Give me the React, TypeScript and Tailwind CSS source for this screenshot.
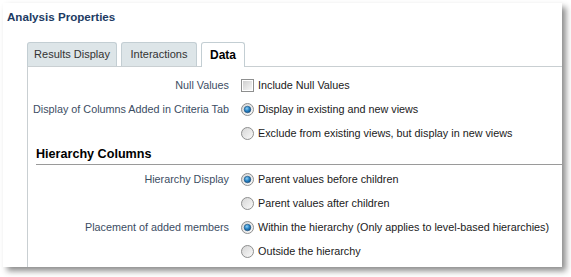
import React from 'react'

const font = { fontFamily: '"Liberation Sans", Arial, sans-serif' }

function Radio({ checked }: { checked?: boolean }) {
  return (
    <svg width="13" height="13" viewBox="0 0 13 13" className="shrink-0">
      <defs>
        <linearGradient id="rbg" x1="0" y1="0" x2="1" y2="1">
          <stop offset="0" stopColor="#d4d4d4" />
          <stop offset="1" stopColor="#fbfbfb" />
        </linearGradient>
        <radialGradient id="rdot" cx="0.4" cy="0.35" r="0.7">
          <stop offset="0" stopColor="#8fd0f5" />
          <stop offset="0.5" stopColor="#2a86c8" />
          <stop offset="1" stopColor="#0f4f86" />
        </radialGradient>
      </defs>
      <circle cx="6.5" cy="6.5" r="6" fill="url(#rbg)" stroke="#8e8f8f" strokeWidth="1" />
      {checked && <circle cx="6.5" cy="6.5" r="3.3" fill="url(#rdot)" stroke="#1b4f7a" strokeWidth="0.6" />}
    </svg>
  )
}

function Checkbox() {
  return (
    <svg width="13" height="13" viewBox="0 0 13 13" className="shrink-0">
      <defs>
        <linearGradient id="cbg" x1="0" y1="0" x2="1" y2="1">
          <stop offset="0" stopColor="#cfcfcf" />
          <stop offset="1" stopColor="#f7f7f7" />
        </linearGradient>
      </defs>
      <rect x="0.5" y="0.5" width="12" height="12" fill="#fff" stroke="#8e8f8f" />
      <rect x="2" y="2" width="9" height="9" fill="url(#cbg)" />
    </svg>
  )
}

function Row({ label, children, h = 'h-[24px]' }: { label?: string; children: React.ReactNode; h?: string }) {
  return (
    <div className={`flex items-center ${h}`}>
      <div className="w-[201px] shrink-0 text-right text-[10.8px] text-[#3c4d63] whitespace-nowrap">{label}</div>
      <div className="ml-[12px] flex items-center gap-[4px] text-[10.8px] text-[#1a1a1a] whitespace-nowrap">{children}</div>
    </div>
  )
}

export default function App() {
  return (
    <div className="w-[571px] h-[277px] bg-white overflow-hidden" style={font}>
      <div className="ml-[3px] mt-[3px] w-[559px] h-[264px] bg-white shadow-[4px_4px_6px_rgba(0,0,0,0.45)] flex flex-col">
        <div className="pl-[4px] pt-[5px] h-[38px] text-[11.6px] font-bold text-[#1d3b63]">Analysis Properties</div>

        <div className="ml-[24px] flex items-end h-[25px] gap-[4px]">
          <div className="h-[24px] w-[90px] rounded-t-[3px] border border-b-0 border-[#c3ced3] bg-[#dde5e8] flex items-center justify-center text-[11px] text-[#333]">
            Results Display
          </div>
          <div className="h-[24px] w-[76px] rounded-t-[3px] border border-b-0 border-[#c3ced3] bg-[#dde5e8] flex items-center justify-center text-[11px] text-[#333]">
            Interactions
          </div>
          <div className="h-[25px] w-[44px] rounded-t-[3px] border border-b-0 border-[#c3ced3] bg-white flex items-center justify-center text-[12px] font-bold text-black -mb-px relative z-10">
            Data
          </div>
        </div>

        <div className="ml-[24px] flex-1 border-l border-t border-[#c9cfd2] pt-[7px]">
          <Row label="Null Values" h="h-[23px]">
            <Checkbox />
            <span>Include Null Values</span>
          </Row>
          <Row label="Display of Columns Added in Criteria Tab">
            <Radio checked />
            <span>Display in existing and new views</span>
          </Row>
          <Row>
            <Radio />
            <span>Exclude from existing views, but display in new views</span>
          </Row>

          <div className="ml-[8px] h-[20px] border-b border-[#9a9a9a] flex items-end pb-0 text-[12.6px] font-bold text-black">
            Hierarchy Columns
          </div>

          <div className="pt-[2px]">
            <Row label="Hierarchy Display">
              <Radio checked />
              <span>Parent values before children</span>
            </Row>
            <Row>
              <Radio />
              <span>Parent values after children</span>
            </Row>
            <Row label="Placement of added members">
              <Radio checked />
              <span>Within the hierarchy (Only applies to level-based hierarchies)</span>
            </Row>
            <Row>
              <Radio />
              <span>Outside the hierarchy</span>
            </Row>
          </div>
        </div>
      </div>
    </div>
  )
}
